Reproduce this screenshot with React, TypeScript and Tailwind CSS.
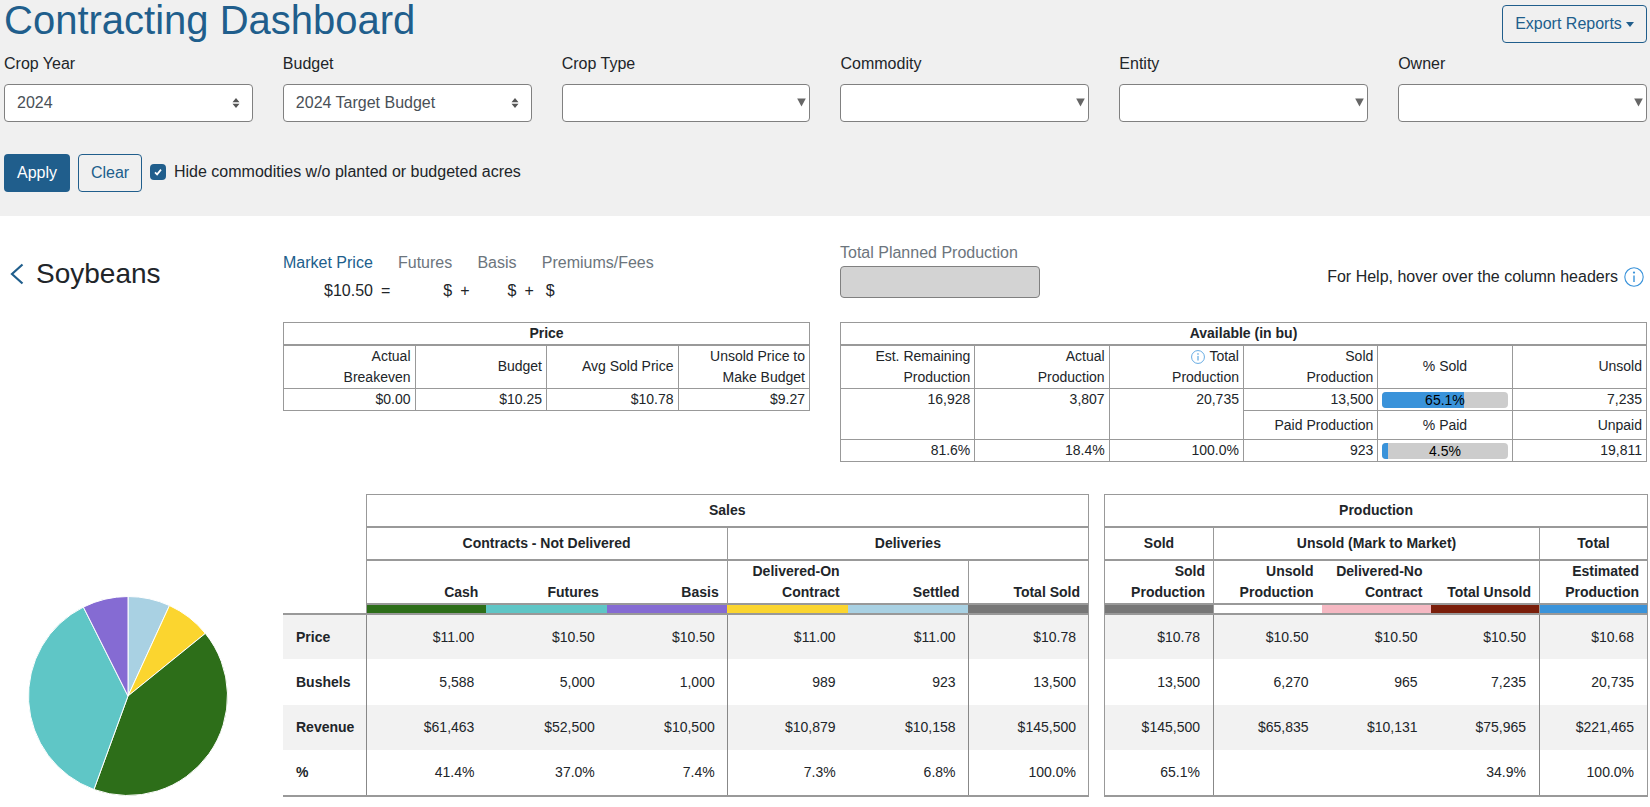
import React from "react";

function Info({ size }: { size: number }) {
  return (
    <svg width={size} height={size} viewBox="0 0 20 20" fill="none" className="inline-block shrink-0">
      <circle cx="10" cy="10" r="9.2" stroke="#3a93da" strokeWidth="1.1" />
      <circle cx="10" cy="5.6" r="1.1" fill="#3a93da" />
      <path d="M10 8.5V15" stroke="#3a93da" strokeWidth="1.4" />
    </svg>
  );
}

function Field({ label, value, kind }: { label: string; value?: string; kind: "arrows" | "tri" }) {
  return (
    <div>
      <div className="h-[24px] leading-[24px] mb-[8px] text-[#212529]">{label}</div>
      <div className="relative h-[38px] bg-white border border-[#808080] rounded-[4px] pl-[12px] leading-[36px] text-[#495057]">
        {value}
        {kind === "arrows" ? (
          <svg width="8" height="10" viewBox="0 0 8 10" className="absolute right-[12px] top-[13px]">
            <path d="M4 0L7.5 4.3H0.5Z M4 10L0.5 5.7H7.5Z" fill="#555" />
          </svg>
        ) : (
          <svg width="9" height="9" viewBox="0 0 9 9" className="absolute right-[3px] top-[13px]">
            <path d="M0.2 0.5H8.8L4.5 8.5Z" fill="#666" />
          </svg>
        )}
      </div>
    </div>
  );
}

function Progress({ pct, label }: { pct: number; label: string }) {
  return (
    <div className="relative h-[16px] bg-[#cccccc] rounded-[4px] overflow-hidden mx-auto w-[126px] text-center text-[14px] leading-[16px] text-black">
      <div className="absolute left-0 top-0 bottom-0 bg-[#3a93da]" style={{ width: `${pct}%` }} />
      <span className="relative">{label}</span>
    </div>
  );
}

function Pie() {
  const slices = [
    { v: 6.84, c: "#a9d1e3" },
    { v: 7.33, c: "#fbd52f" },
    { v: 41.39, c: "#2d6e19" },
    { v: 37.04, c: "#5fc6c6" },
    { v: 7.4, c: "#856bd3" },
  ];
  const cx = 101;
  const cy = 101;
  const r = 99.5;
  let acc = 0;
  return (
    <svg width="202" height="202" viewBox="0 0 202 202">
      {slices.map((s, i) => {
        const a0 = (acc / 100) * 2 * Math.PI;
        acc += s.v;
        const a1 = (acc / 100) * 2 * Math.PI;
        const d = `M${cx} ${cy}L${cx + r * Math.sin(a0)} ${cy - r * Math.cos(a0)}A${r} ${r} 0 ${s.v > 50 ? 1 : 0} 1 ${cx + r * Math.sin(a1)} ${cy - r * Math.cos(a1)}Z`;
        return <path key={i} d={d} fill={s.c} stroke="#ffffff" strokeWidth="1" />;
      })}
    </svg>
  );
}

const thin = "border border-[#999999]";
const cellSm = "border border-[#999999] px-[4px] py-0 text-right font-normal align-middle";
const smallHead = "border border-[#999999] border-b-2 font-bold text-center p-0 leading-[20px]";
const groupHead = "border border-[#999999] border-b-2 font-bold text-center p-0";

function BodyRows({
  labels,
  rows,
  borders,
  valuePad,
}: {
  labels?: string[];
  rows: string[][];
  borders: number[];
  valuePad: string;
}) {
  return (
    <>
      {rows.map((r, i) => (
        <tr key={i} className={`h-[45.5px] ${i % 2 === 0 ? "bg-[#f2f2f2]" : "bg-white"}`}>
          {labels && <td className="font-bold pl-[13px] p-0 text-left">{labels[i]}</td>}
          {r.map((v, j) => (
            <td key={j} className={`text-right p-0 ${valuePad} ${borders.includes(j) ? "border-l border-[#888888]" : ""}`}>{v}</td>
          ))}
        </tr>
      ))}
    </>
  );
}

export default function App() {
  return (
    <div className="w-[1650px] h-[807px] overflow-hidden bg-white text-[16px] text-[#212529] font-['Liberation_Sans',Arial,sans-serif]">
      <div className="h-[216px] bg-[#f0f0f0] px-[4px]">
        <div className="flex justify-between items-start h-[52px]">
          <h1 className="text-[40px] leading-[40px] text-[#205e8c]">Contracting Dashboard</h1>
          <button className="mt-[5px] mr-[-1px] h-[38px] w-[145px] border border-[#205e8c] rounded-[4px] text-[#205e8c] flex items-center justify-center gap-[4px]">
            Export Reports
            <span className="inline-block border-t-[5px] border-t-[#205e8c] border-x-[4px] border-x-transparent" />
          </button>
        </div>
        <div className="grid grid-cols-6 gap-x-[30px] w-[1643px]">
          <Field label="Crop Year" value="2024" kind="arrows" />
          <Field label="Budget" value="2024 Target Budget" kind="arrows" />
          <Field label="Crop Type" kind="tri" />
          <Field label="Commodity" kind="tri" />
          <Field label="Entity" kind="tri" />
          <Field label="Owner" kind="tri" />
        </div>
        <div className="flex items-center mt-[32px] h-[38px]">
          <button className="h-[38px] w-[66px] bg-[#205e8c] text-white rounded-[4px]">Apply</button>
          <button className="ml-[8px] h-[38px] w-[64px] border border-[#205e8c] text-[#205e8c] rounded-[4px]">Clear</button>
          <span className="ml-[8px] mt-[-2px] w-[16px] h-[16px] bg-[#205e8c] rounded-[4px] flex items-center justify-center">
            <svg width="10" height="10" viewBox="0 0 10 10" fill="none">
              <path d="M2 5.3L4.1 7.4L8 2.6" stroke="#fff" strokeWidth="1.7" />
            </svg>
          </span>
          <span className="ml-[8px] mt-[-2px]">Hide commodities w/o planted or budgeted acres</span>
        </div>
      </div>

      <div className="flex pt-[35px]">
        <div className="w-[283px] shrink-0 flex items-start pl-[10px] pt-[6px]">
          <svg width="14" height="22" viewBox="0 0 14 22" fill="none" className="mt-[6px]">
            <path d="M12.5 1.5L2 11L12.5 20.5" stroke="#205e8c" strokeWidth="2.2" />
          </svg>
          <h3 className="ml-[12px] text-[28px] leading-[34px]">Soybeans</h3>
        </div>

        <div className="w-[527px] shrink-0">
          <div className="flex gap-[25.2px] h-[24px] leading-[24px] text-[#6c757d]">
            <span className="text-[#205e8c]">Market Price</span>
            <span>Futures</span>
            <span>Basis</span>
            <span>Premiums/Fees</span>
          </div>
          <div className="flex h-[24px] leading-[24px] mt-[4px]">
            <span className="w-[90px] text-right">$10.50</span>
            <span className="ml-[8px]">=</span>
            <span className="ml-[53px]">$</span>
            <span className="ml-[8px]">+</span>
            <span className="ml-[38px]">$</span>
            <span className="ml-[8px]">+</span>
            <span className="ml-[12px]">$</span>
          </div>
          <table className="mt-[19px] w-[527px] table-fixed border-collapse text-[14px] leading-[21px]">
            <tbody>
              <tr className="h-[22px]">
                <th colSpan={4} className={smallHead}>Price</th>
              </tr>
              <tr className="h-[43px]">
                <td className={cellSm}>Actual<br />Breakeven</td>
                <td className={cellSm}>Budget</td>
                <td className={cellSm}>Avg Sold Price</td>
                <td className={cellSm}>Unsold Price to<br />Make Budget</td>
              </tr>
              <tr className="h-[22px]">
                <td className={cellSm}>$0.00</td>
                <td className={cellSm}>$10.25</td>
                <td className={cellSm}>$10.78</td>
                <td className={cellSm}>$9.27</td>
              </tr>
            </tbody>
          </table>
        </div>

        <div className="ml-[30px] w-[807px] shrink-0">
          <div className="flex justify-between h-[73px] mt-[-10px]">
            <div>
              <div className="h-[24px] leading-[24px] text-[#6c757d]">Total Planned Production</div>
              <div className="mt-[1px] w-[200px] h-[32px] bg-[#d3d3d3] border border-[#808080] rounded-[4px]" />
            </div>
            <div className="flex items-center gap-[6px] h-[24px] mt-[24px] mr-[3px]">
              <span>For Help, hover over the column headers</span>
              <Info size={20} />
            </div>
          </div>
          <table className="w-[807px] table-fixed border-collapse text-[14px] leading-[21px] mt-[8px]">
            <tbody>
              <tr className="h-[22px]">
                <th colSpan={6} className={smallHead}>Available (in bu)</th>
              </tr>
              <tr className="h-[43px]">
                <td className={cellSm}>Est. Remaining<br />Production</td>
                <td className={cellSm}>Actual<br />Production</td>
                <td className={cellSm}>
                  <span className="inline-flex items-center gap-[4px] align-middle"><Info size={14} />Total</span>
                  <br />Production
                </td>
                <td className={cellSm}>Sold<br />Production</td>
                <td className={`${cellSm} !text-center`}>% Sold</td>
                <td className={cellSm}>Unsold</td>
              </tr>
              <tr className="h-[22px]">
                <td rowSpan={2} className={`${cellSm} !align-top`}>16,928</td>
                <td rowSpan={2} className={`${cellSm} !align-top`}>3,807</td>
                <td rowSpan={2} className={`${cellSm} !align-top`}>20,735</td>
                <td className={cellSm}>13,500</td>
                <td className={`${thin} p-0`}><Progress pct={65.1} label="65.1%" /></td>
                <td className={cellSm}>7,235</td>
              </tr>
              <tr className="h-[29px]">
                <td className={cellSm}>Paid Production</td>
                <td className={`${cellSm} !text-center`}>% Paid</td>
                <td className={cellSm}>Unpaid</td>
              </tr>
              <tr className="h-[22px]">
                <td className={cellSm}>81.6%</td>
                <td className={cellSm}>18.4%</td>
                <td className={cellSm}>100.0%</td>
                <td className={cellSm}>923</td>
                <td className={`${thin} p-0`}><Progress pct={4.5} label="4.5%" /></td>
                <td className={cellSm}>19,811</td>
              </tr>
            </tbody>
          </table>
        </div>
      </div>

      <div className="flex mt-[32px]">
        <div className="w-[283px] shrink-0 flex items-end pl-[27px]">
          <Pie />
        </div>

        <table className="w-[806px] shrink-0 table-fixed border-collapse text-[14px] leading-[21px]">
          <colgroup>
            <col className="w-[83px]" />
            <col /><col /><col /><col /><col /><col />
          </colgroup>
          <thead>
            <tr className="h-[32px]">
              <th className="p-0" />
              <th colSpan={6} className={groupHead}>Sales</th>
            </tr>
            <tr className="h-[33px]">
              <th className="p-0" />
              <th colSpan={3} className={groupHead}>Contracts - Not Delivered</th>
              <th colSpan={3} className={groupHead}>Deliveries</th>
            </tr>
            <tr className="h-[43px] align-bottom text-right font-bold">
              <th className="p-0" />
              <th className="border-l border-[#999999] p-0 pr-[8px]">Cash</th>
              <th className="p-0 pr-[8px]">Futures</th>
              <th className="p-0 pr-[8px]">Basis</th>
              <th className="border-l border-[#999999] p-0 pr-[8px]">Delivered-On<br />Contract</th>
              <th className="p-0 pr-[8px]">Settled</th>
              <th className="border-x border-[#999999] p-0 pr-[8px]">Total Sold</th>
            </tr>
            <tr className="h-[10px] border-b-2 border-[#999999]">
              <td className="p-0" />
              <td className="p-0 border-t-2 border-[#999999] bg-[#2d6e19] border-l" />
              <td className="p-0 border-t-2 border-[#999999] bg-[#5fc6c6]" />
              <td className="p-0 border-t-2 border-[#999999] bg-[#856bd3]" />
              <td className="p-0 border-t-2 border-[#999999] bg-[#fbd52f]" />
              <td className="p-0 border-t-2 border-[#999999] bg-[#a9d1e3]" />
              <td className="p-0 border-t-2 border-[#999999] bg-[#777777] border-r" />
            </tr>
          </thead>
          <tbody className="border-b-2 border-r border-[#999999]">
            <BodyRows
              labels={["Price", "Bushels", "Revenue", "%"]}
              borders={[0, 3, 5]}
              valuePad="pr-[12px]"
              rows={[
                ["$11.00", "$10.50", "$10.50", "$11.00", "$11.00", "$10.78"],
                ["5,588", "5,000", "1,000", "989", "923", "13,500"],
                ["$61,463", "$52,500", "$10,500", "$10,879", "$10,158", "$145,500"],
                ["41.4%", "37.0%", "7.4%", "7.3%", "6.8%", "100.0%"],
              ]}
            />
          </tbody>
        </table>

        <table className="ml-[15px] w-[543px] shrink-0 table-fixed border-collapse text-[14px] leading-[21px] border-x border-[#999999]">
          <colgroup>
            <col className="w-[109px]" />
            <col className="w-[108px]" />
            <col className="w-[109px]" />
            <col className="w-[109px]" />
            <col className="w-[108px]" />
          </colgroup>
          <thead>
            <tr className="h-[32px]">
              <th colSpan={5} className={groupHead}>Production</th>
            </tr>
            <tr className="h-[33px]">
              <th className={groupHead}>Sold</th>
              <th colSpan={3} className={groupHead}>Unsold (Mark to Market)</th>
              <th className={groupHead}>Total</th>
            </tr>
            <tr className="h-[43px] align-bottom text-right font-bold">
              <th className="p-0 pr-[8px]">Sold<br />Production</th>
              <th className="border-l border-[#999999] p-0 pr-[8px]">Unsold<br />Production</th>
              <th className="p-0 pr-[8px]">Delivered-No<br />Contract</th>
              <th className="p-0 pr-[8px]">Total Unsold</th>
              <th className="border-l border-[#999999] p-0 pr-[8px]">Estimated<br />Production</th>
            </tr>
            <tr className="h-[10px] border-b-2 border-[#999999]">
              <td className="p-0 border-t-2 border-[#999999] bg-[#777777]" />
              <td className="p-0 border-t-2 border-[#999999] bg-white border-l" />
              <td className="p-0 border-t-2 border-[#999999] bg-[#f5b8c2]" />
              <td className="p-0 border-t-2 border-[#999999] bg-[#7a1e0a]" />
              <td className="p-0 border-t-2 border-[#999999] bg-[#3a93da] border-l" />
            </tr>
          </thead>
          <tbody className="border-b-2 border-[#999999]">
            <BodyRows
              borders={[1, 4]}
              valuePad="pr-[13px]"
              rows={[
                ["$10.78", "$10.50", "$10.50", "$10.50", "$10.68"],
                ["13,500", "6,270", "965", "7,235", "20,735"],
                ["$145,500", "$65,835", "$10,131", "$75,965", "$221,465"],
                ["65.1%", "", "", "34.9%", "100.0%"],
              ]}
            />
          </tbody>
        </table>
      </div>
    </div>
  );
}
